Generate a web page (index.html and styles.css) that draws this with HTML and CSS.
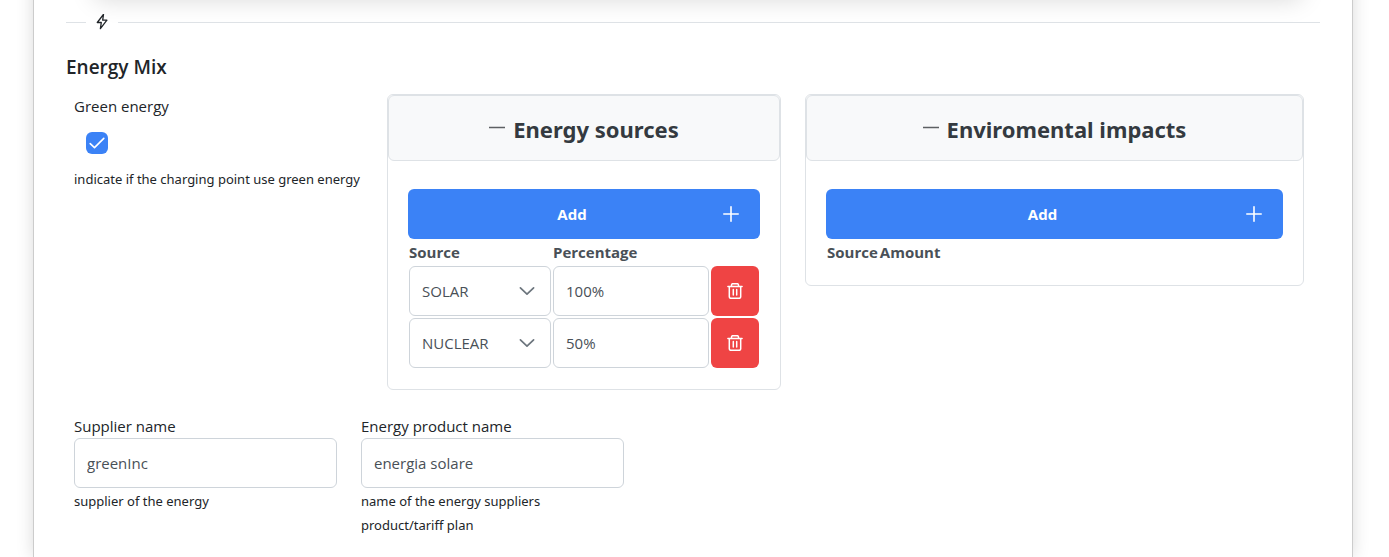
FILE: index.html
```html
<!DOCTYPE html>
<html lang="en">
<head>
<meta charset="utf-8">
<title>Energy Mix</title>
<link rel="stylesheet" href="styles.css">
</head>
<body>
<svg class="sprite" aria-hidden="true">
  <symbol id="i-plus" viewBox="0 0 16 16"><path d="M8 .8v14.400M.8 8h14.400" fill="none" stroke="currentColor" stroke-width="1.6" stroke-linecap="round"/></symbol>
  <symbol id="i-minus" viewBox="0 0 16 16"><path d="M.5 7.500h15" fill="none" stroke="currentColor" stroke-width="1.600" stroke-linecap="round"/></symbol>
  <symbol id="i-chevron" viewBox="0 0 16 16"><path d="M1.400 4.800 8 11.200l6.600-6.400" fill="none" stroke="currentColor" stroke-width="1.700" stroke-linecap="round" stroke-linejoin="round"/></symbol>
  <symbol id="i-trash" viewBox="0 0 16 16"><path d="M.9 3.500h14.200M4.500 3.500V2q0-1.300 1.300-1.300h4.400q1.300 0 1.300 1.300v1.500M2.300 3.500v10.300q0 1.500 1.500 1.500h8.400q1.500 0 1.500-1.500V3.500M6.300 6.600v5.400M9.700 6.600v5.400" fill="none" stroke="currentColor" stroke-width="1.5" stroke-linecap="round"/></symbol>
  <symbol id="i-bolt" viewBox="0 0 16 16"><path d="M9.500.3 3.300 8.500h4L6.400 14.700 12.900 6.200H8.700z" fill="none" stroke="currentColor" stroke-width="1.300" stroke-linejoin="round"/></symbol>
  <symbol id="i-check" viewBox="0 0 16 16"><path d="M1.200 8.600 5.500 12.600 14.800 3.400" fill="none" stroke="currentColor" stroke-width="1.600" stroke-linecap="round" stroke-linejoin="round"/></symbol>
</svg>
<main class="sheet">
  <div class="previous-panel"></div>
  <div class="divider"><svg class="icon"><use href="#i-bolt"/></svg></div>
  <h2 class="section-title">Energy Mix</h2>
  <div class="mix">
    <div class="field">
      <label for="green">Green energy</label>
      <span class="check">
        <input type="checkbox" id="green" checked aria-describedby="green-help">
        <svg class="icon check-mark"><use href="#i-check"/></svg>
      </span>
      <small id="green-help">indicate if the charging point use green energy</small>
    </div>
    <section class="panel">
      <h3 class="panel-title"><svg class="icon"><use href="#i-minus"/></svg>Energy sources</h3>
      <div class="panel-body">
        <button type="button" class="add"><span class="add-label">Add</span><svg class="icon"><use href="#i-plus"/></svg></button>
        <table class="rows rows-full">
          <thead><tr><th class="col-source">Source</th><th>Percentage</th><th class="col-action"></th></tr></thead>
          <tbody>
            <tr>
              <td><span class="dropdown"><select class="control" aria-label="Source 1"><option>SOLAR</option></select><svg class="icon chevron"><use href="#i-chevron"/></svg></span></td>
              <td><input class="control" type="text" value="100%" aria-label="Percentage 1"></td>
              <td><button type="button" class="remove" aria-label="Remove source 1"><svg class="icon"><use href="#i-trash"/></svg></button></td>
            </tr>
            <tr>
              <td><span class="dropdown"><select class="control" aria-label="Source 2"><option>NUCLEAR</option></select><svg class="icon chevron"><use href="#i-chevron"/></svg></span></td>
              <td><input class="control" type="text" value="50%" aria-label="Percentage 2"></td>
              <td><button type="button" class="remove" aria-label="Remove source 2"><svg class="icon"><use href="#i-trash"/></svg></button></td>
            </tr>
          </tbody>
        </table>
      </div>
    </section>
    <section class="panel">
      <h3 class="panel-title"><svg class="icon"><use href="#i-minus"/></svg>Enviromental impacts</h3>
      <div class="panel-body">
        <button type="button" class="add"><span class="add-label">Add</span><svg class="icon"><use href="#i-plus"/></svg></button>
        <table class="rows">
          <thead><tr><th>Source</th><th>Amount</th></tr></thead>
        </table>
      </div>
    </section>
  </div>
  <div class="details">
    <div class="field detail">
      <label for="supplier">Supplier name</label>
      <input class="control" id="supplier" type="text" value="greenInc" aria-describedby="supplier-help">
      <small id="supplier-help">supplier of the energy</small>
    </div>
    <div class="field detail">
      <label for="product">Energy product name</label>
      <input class="control" id="product" type="text" value="energia solare" aria-describedby="product-help">
      <small id="product-help">name of the energy suppliers product/tariff plan</small>
    </div>
  </div>
</main>
</body>
</html>
```
FILE: styles.css
```css
*, *::before, *::after { box-sizing: border-box; }

body {
  margin: 0;
  overflow: hidden;
  background: #fff;
  color: #212529;
  font: 15px/24px "Segoe UI", "Open Sans", "Noto Sans", sans-serif;
}

.sprite { display: none; }
.icon { width: 16px; height: 16px; flex: none; }

.sheet {
  min-height: 100vh;
  margin: 0 36px 0 33px;
  padding: 0 32px;
  border: solid #ccc;
  border-width: 0 1px;
  box-shadow: 0 0 16px rgba(0, 0, 0, .15);
  background: #fff;
}

.previous-panel {
  height: 40px;
  margin: -48px 18px 22px 28px;
  border-radius: 6px;
  box-shadow: 0 8px 24px rgba(0, 0, 0, .15);
}

.divider {
  display: flex;
  align-items: center;
  gap: 8px;
  height: 16px;
}
.divider::before, .divider::after {
  content: "";
  height: 1px;
  background: #dee2e6;
}
.divider::before { width: 20px; }
.divider::after { flex: 1; }

.section-title {
  margin: 25px 0 15px;
  font-size: 19px;
  font-weight: 600;
  line-height: 24px;
}

.mix {
  display: grid;
  grid-template-columns: 289fr 394fr 499fr;
  align-items: start;
  gap: 24px;
  padding: 0 16px 0 8px;
}

.field { display: flex; flex-direction: column; }
.field small {
  font-family: "Segoe UI", "Noto Sans", sans-serif;
  font-size: 13px;
  line-height: 24px;
}

.check {
  position: relative;
  width: 22px;
  height: 22px;
  margin: 14px 12px 13px;
}
.check input {
  appearance: none;
  display: block;
  width: 22px;
  height: 22px;
  margin: 0;
  border-radius: 6px;
  background: #3b82f6;
}
.check-mark {
  position: absolute;
  inset: 3px;
  color: #fff;
  pointer-events: none;
}

.panel {
  min-width: 0;
  border: 1px solid #dee2e6;
  border-radius: 6px;
}
.panel-title {
  display: flex;
  justify-content: center;
  gap: 8px;
  margin: 0;
  padding: 19px 18px 17px;
  border: 1px solid #dee2e6;
  border-radius: 6px;
  background: #f8f9fa;
  color: #343a40;
  font-family: "Segoe UI", "Noto Sans", sans-serif;
  font-size: 22px;
  font-weight: 700;
  line-height: 28px;
}
.panel-title .icon { margin-top: 5px; color: #5d6063; }
.panel-body { padding: 28px 20px 20px; }

.add {
  display: flex;
  align-items: center;
  width: 100%;
  height: 50px;
  padding: 0 21px 0 13px;
  border: 0;
  border-radius: 6px;
  background: #3b82f6;
  color: #fff;
  font: inherit;
  font-weight: 700;
}
.add-label { flex: 1; }

.rows { border-collapse: collapse; color: #495057; }
.rows-full { width: 100%; table-layout: fixed; }
.rows th { padding: 1px; text-align: left; font-weight: 700; }
.rows td { padding: 1px; }
.col-source { width: 144px; }
.col-action { width: 50px; }

.control {
  appearance: none;
  display: block;
  width: 100%;
  height: 50px;
  padding: 0 12px;
  border: 1px solid #ced4da;
  border-radius: 6px;
  background: #fff;
  color: #495057;
  font: inherit;
}
.dropdown { display: block; position: relative; }
.chevron {
  position: absolute;
  top: 17px;
  right: 16px;
  color: #6c757d;
  pointer-events: none;
}

.remove {
  display: flex;
  align-items: center;
  justify-content: center;
  width: 100%;
  height: 50px;
  padding: 0;
  border: 0;
  border-radius: 6px;
  background: #ef4444;
  color: #fff;
}

.details {
  display: flex;
  flex-wrap: wrap;
  gap: 24px;
  padding: 24px 8px 20px;
}
.detail { width: 263px; }
.detail small { margin-top: 1px; max-width: 220px; }
```
